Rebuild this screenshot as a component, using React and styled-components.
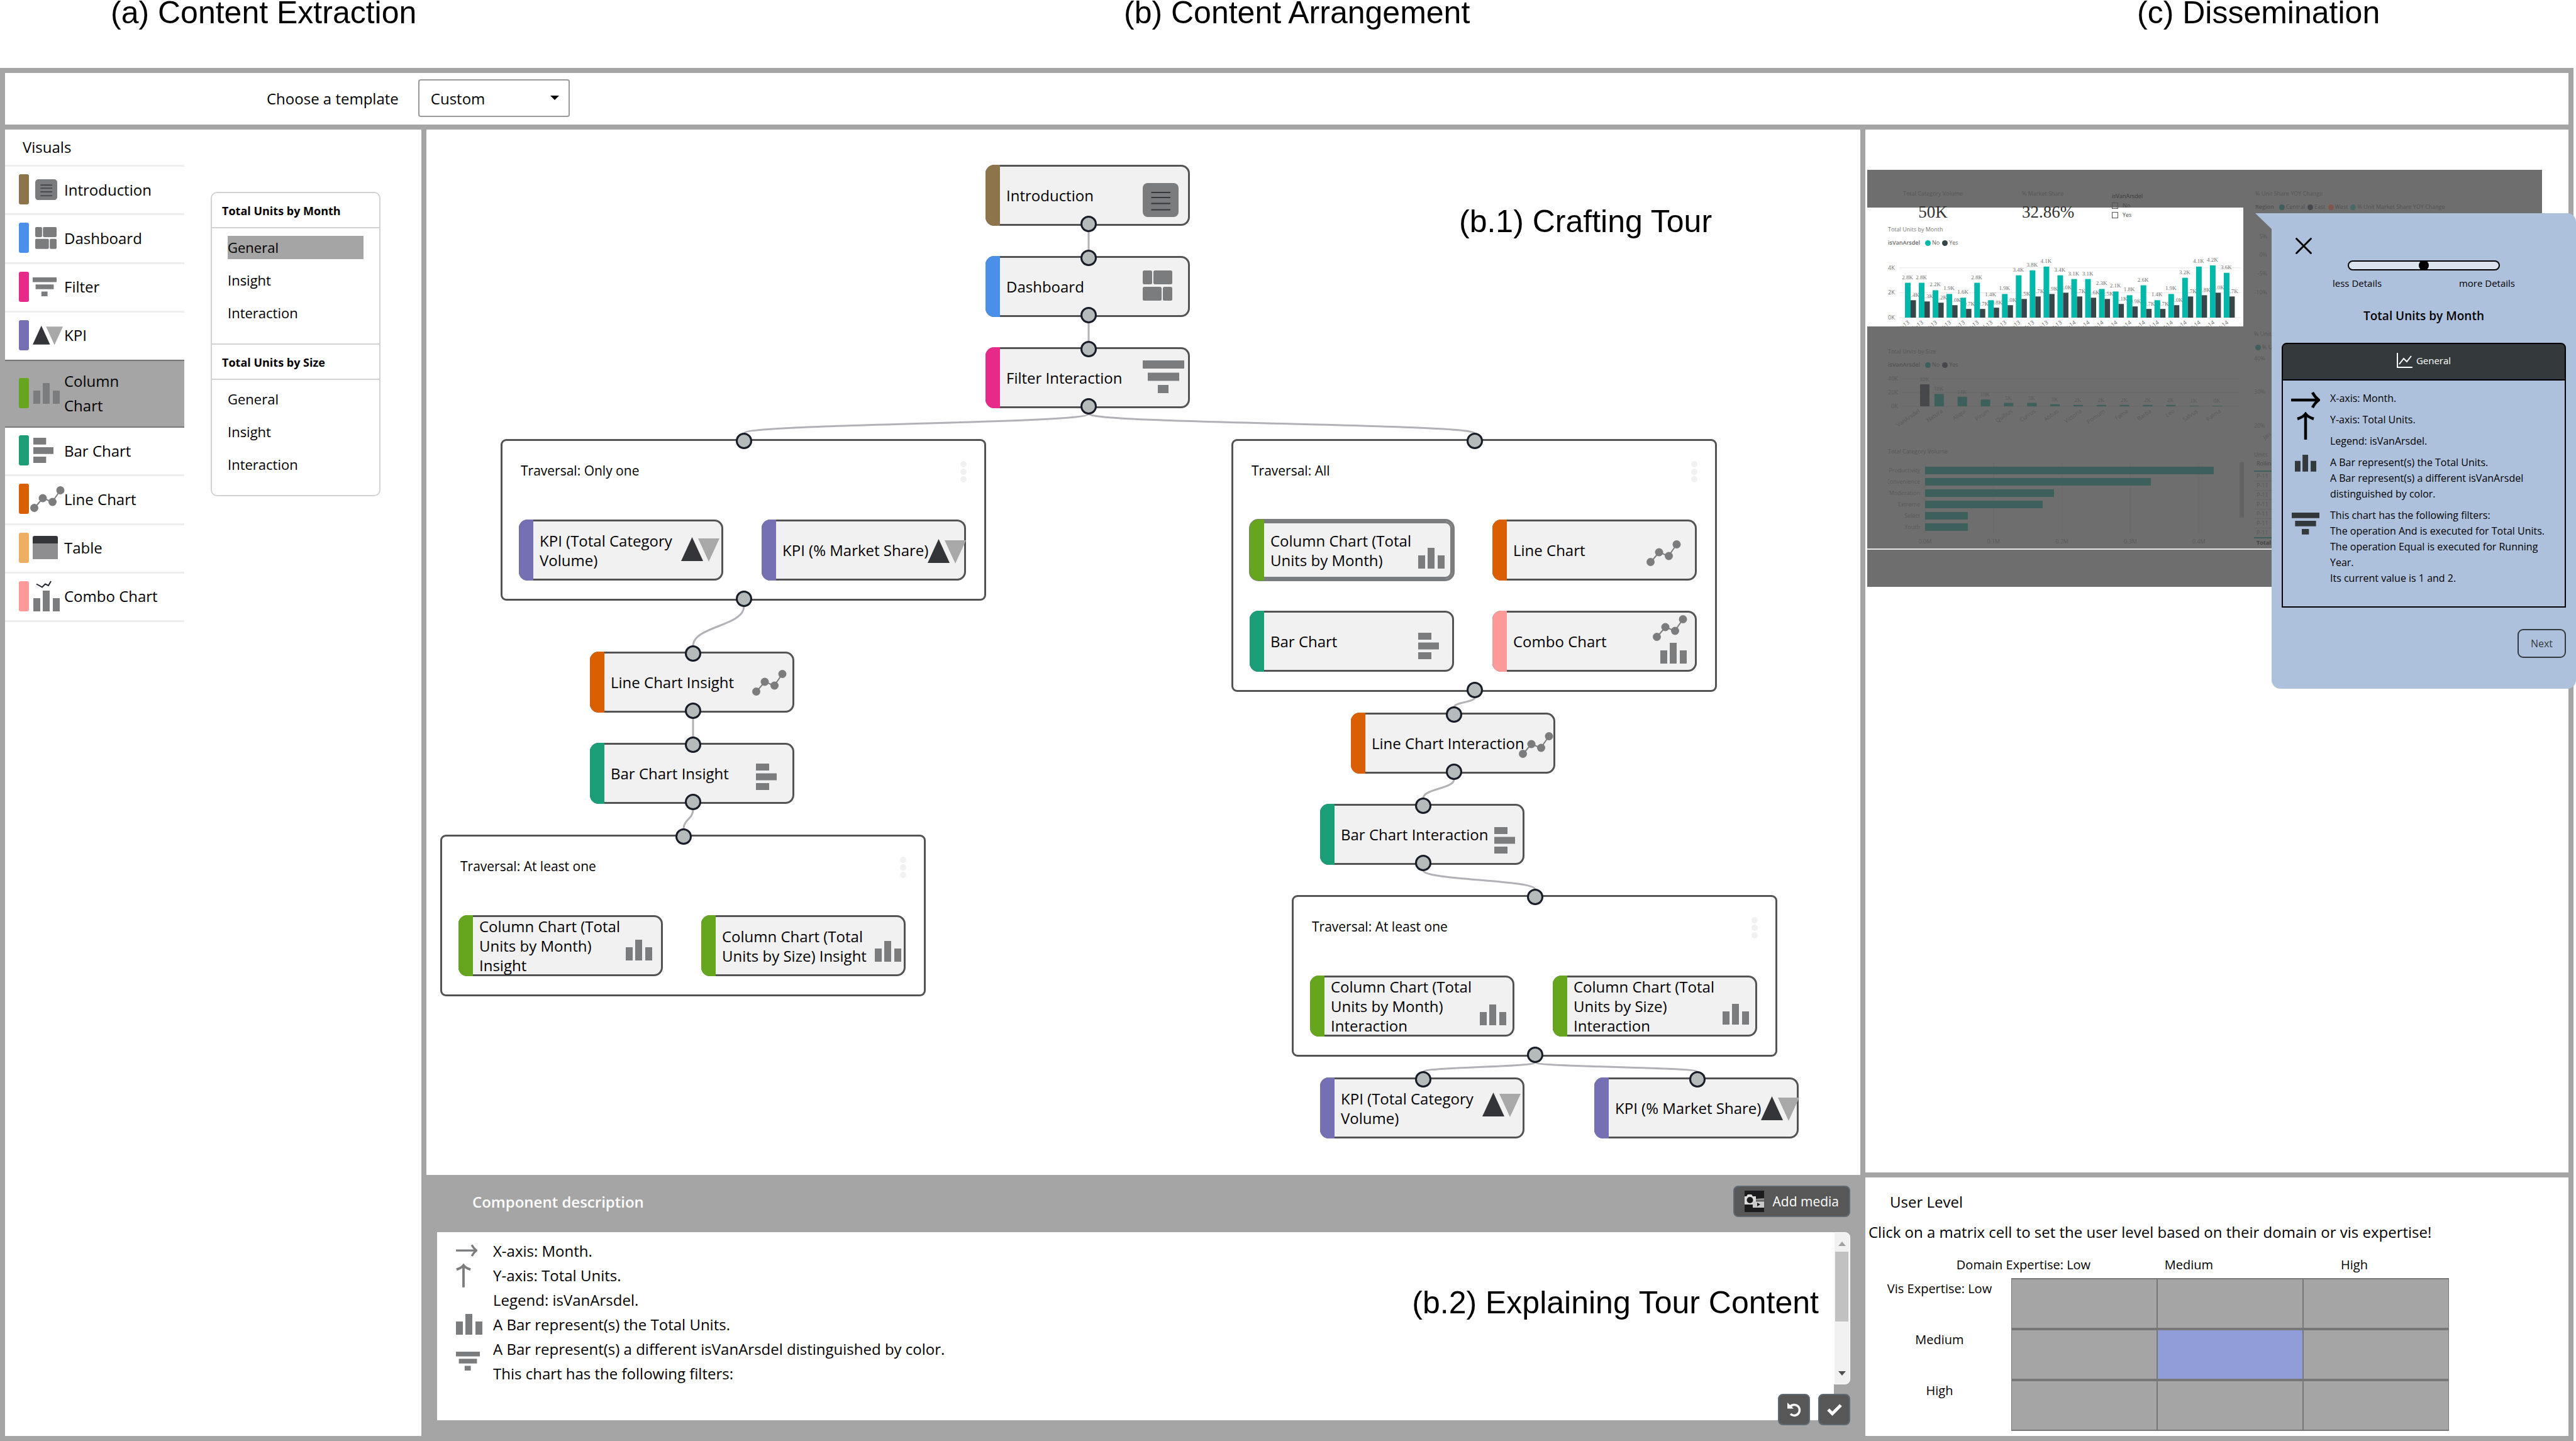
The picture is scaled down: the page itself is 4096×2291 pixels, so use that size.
import React, { useState } from "react";
import styled, { createGlobalStyle, css } from "styled-components";

const SANS = '"Open Sans", "Noto Sans", sans-serif';
const ARIAL = '"Liberation Sans", Arial, sans-serif';
const SERIF = '"Liberation Serif", "Times New Roman", serif';
const GREY = "#a5a5a5";
const ICON = "#7b7c7e";
const INK = "#343a3c";

const GlobalStyle = createGlobalStyle`
  *, *::before, *::after { box-sizing: border-box; }
  body { margin: 0; background: #fff; color: #000; font-family: ${SANS}; font-size: 24px; }
  button, select, input { font-family: inherit; color: inherit; margin: 0; }
  h1, h2, h3, p, ul { margin: 0; padding: 0; font-weight: 400; font-size: inherit; }
  ul { list-style: none; }
  svg { display: block; flex: none; }
`;

/* ---------- icons ---------- */

const LinePlot = () => (
  <>
    <path d="M6.500 35 20 19 35 25 48 6.500" fill="none" stroke={ICON} strokeWidth="2" />
    <circle cx="6.500" cy="34.500" r="6.500" />
    <circle cx="20" cy="19" r="6.500" />
    <circle cx="35.500" cy="25" r="6.500" />
    <circle cx="48" cy="6.500" r="6.500" />
  </>
);
const Columns = () => <path d="M0 12h11v21H0zM15 0h11v33H15zM31 12h11v21H31z" />;

const ICONS = {
  intro: [57, 54, <><rect width="57" height="54" rx="8" /><path d="M13.500 15h30.500M13.500 23h30.500M13.500 32.500h30.500M13.500 42.500h30.500" stroke="#35373a" strokeWidth="2.200" /></>],
  dashboard: [47, 48, <><rect width="15" height="22" rx="2.500" /><rect x="17" width="30" height="22" rx="2.500" /><rect y="26" width="30" height="22" rx="2.500" /><rect x="32" y="26" width="15" height="22" rx="2.500" /></>],
  filter: [66, 52, <path d="M0 0h66v13H0zM8 19.500h50v13H8zM24 39h17v13H24z" />],
  kpi: [61, 40, <><path d="M0 39h35L17.500 1z" fill="#333538" /><path d="M27 3h34L44 40z" fill="#a8a8a8" /></>],
  column: [42, 33, <Columns />],
  bar: [33, 42, <path d="M0 0h21v11H0zM0 15.500h33v11H0zM0 31h21v11H0z" />],
  line: [55, 41, <LinePlot />],
  table: [40, 37, <><path d="M0 12h40v25H0z" fill="#8e8e91" /><path d="M0 3q0-3 3-3h34q3 0 3 3v9H0z" fill="#333538" /></>],
  comboSmall: [42, 49, <><path d="M5 5.500l9 5 5-5 5 2.500 4-7" fill="none" stroke="#20242e" strokeWidth="2" /><g transform="translate(0 16)"><Columns /></g></>],
  combo: [55, 77, <><LinePlot /><g transform="translate(12 44)"><Columns /></g></>],
  arrowRight: [46, 30, <path d="M0 15h44M34 3c3 6 6 9 10 12-4 3-7 6-10 12" fill="none" stroke="currentColor" strokeWidth="4.500" />],
  arrowUp: [28, 44, <path d="M14 44V3M1 11c6-2 10-4 13-8 3 4 7 6 13 8" fill="none" stroke="currentColor" strokeWidth="4.500" />],
};

const Icon = ({ name, width, color = ICON }) => {
  const [w, h, art] = ICONS[name];
  const size = width || w;
  return (
    <svg width={size} height={(size * h) / w} viewBox={`0 0 ${w} ${h}`} fill={color} color={color} aria-hidden="true">
      {art}
    </svg>
  );
};

/* ---------- page shell ---------- */

const Page = styled.div`
  display: flex;
  flex-direction: column;
  min-height: 100vh;
  padding-right: 4px;
`;
const Columns3 = css`
  display: grid;
  grid-template-columns: 662px minmax(0, 1fr) 1118px;
  gap: 8px;
`;
const Titles = styled.header`
  ${Columns3}
  height: 108px;
  padding: 0 8px;
  font-family: ${ARIAL};
`;
const Title = styled.h1`
  font-size: 50px;
  line-height: 40px;
  white-space: nowrap;
  padding-left: ${(p) => p.$indent}px;
`;
const Frame = styled.main`
  flex: 1;
  display: flex;
  flex-direction: column;
  gap: 8px;
  padding: 8px;
  background: ${GREY};
`;
const Toolbar = styled.div`
  height: 82px;
  display: flex;
  align-items: center;
  gap: 31px;
  padding: 0 0 2px 416px;
  background: #fff;
`;
const SelectWrap = styled.div`
  position: relative;
  svg { position: absolute; right: 17px; top: 26px; pointer-events: none; }
`;
const Select = styled.select`
  appearance: none;
  width: 241px;
  height: 60px;
  padding: 0 18px;
  border: 2px solid #999;
  border-radius: 4px;
  background: #fff;
  font-size: 24px;
`;
const Body = styled.div`
  ${Columns3}
  flex: 1;
`;

/* ---------- left panel ---------- */

const LeftPanel = styled.section`
  background: #fff;
  display: flex;
  align-items: flex-start;
  gap: 42px;
`;
const Visuals = styled.nav`
  width: 285px;
  h2 { height: 56px; line-height: 56px; padding-left: 28px; }
`;
const VisualList = styled.ul`
  display: flex;
  flex-direction: column;
  height: 727px;
  border-top: 3px solid #eee;
`;
const VisualItem = styled.li`
  flex: ${(p) => (p.$on ? "0 0 106px" : "1")};
  border-bottom: ${(p) => (p.$on ? "2px solid #777" : "3px solid #eee")};
  background: ${(p) => (p.$on ? GREY : "#fff")};
  box-shadow: ${(p) => (p.$on ? "0 -2px #777" : "none")};
`;
const VisualButton = styled.button`
  width: 100%;
  height: 100%;
  display: flex;
  align-items: center;
  padding: 0 40px 2px 22px;
  border: 0;
  background: none;
  text-align: left;
  font-size: 24px;
  line-height: 39px;
`;
const Swatch = styled.span`
  flex: none;
  width: 16px;
  height: 48px;
  border-radius: 3px;
  background: ${(p) => p.$color};
`;
const IconCell = styled.span`
  flex: none;
  display: flex;
  width: 56px;
  padding-left: ${(p) => p.$inset}px;
`;
const Card = styled.div`
  width: 270px;
  margin-top: 99px;
  border: 2px solid #d2d2d2;
  border-radius: 10px;
`;
const CardSection = styled.section`
  & + & { border-top: 2px solid #d2d2d2; }
  h3 {
    height: 56px;
    line-height: 56px;
    padding-left: 16px;
    font-size: 18px;
    font-weight: 700;
    border-bottom: 2px solid #d2d2d2;
  }
  ul { display: grid; gap: 15px; padding: 12px 25px 30px; }
`;
const CardButton = styled.button`
  display: block;
  width: 100%;
  height: 37px;
  padding: 0;
  border: 0;
  text-align: left;
  font-size: 22px;
  line-height: 37px;
  background: ${(p) => (p.$on ? GREY : "none")};
`;

/* ---------- tour canvas ---------- */

const Middle = styled.section`
  display: flex;
  flex-direction: column;
`;
const Canvas = styled.div`
  position: relative;
  flex: 1;
  background: #fff;
`;
const Edges = styled.svg`
  position: absolute;
  inset: 0;
  width: 100%;
  height: 100%;
`;
const Annotation = styled.h2`
  position: absolute;
  font-family: ${ARIAL};
  font-size: 50px;
  line-height: 56px;
  white-space: nowrap;
`;
const CanvasNote = styled(Annotation)`
  left: 1642px;
  top: 118px;
`;
const ContentNote = styled(Annotation)`
  right: 50px;
  top: 84px;
`;
const Placed = styled.div`
  position: absolute;
  left: ${(p) => p.$x}px;
  top: ${(p) => p.$y}px;
`;
const NodeBox = styled.div`
  position: relative;
  width: 325px;
  height: 97px;
  display: flex;
  align-items: center;
  padding-left: 30px;
  border: 3px solid ${(p) => (p.$selected ? ICON : "#535353")};
  border-radius: 14px;
  background: #f1f1f1;
  box-shadow: ${(p) => (p.$selected ? `0 0 0 1px ${ICON}, inset 0 0 0 3px ${ICON}` : "none")};
  &::before {
    content: "";
    position: absolute;
    left: -3px;
    top: -3px;
    bottom: -3px;
    width: 23px;
    border-radius: 14px 0 0 14px;
    background: ${(p) => p.$color};
  }
`;
const NodeLabel = styled.span`
  font-size: 24px;
  line-height: 31px;
  white-space: pre;
`;
const NodeIcon = styled.span`
  position: absolute;
  left: ${(p) => p.$x}px;
  top: ${(p) => p.$y}px;
`;
const Handle = styled.i`
  position: absolute;
  left: 50%;
  ${(p) => (p.$side === "top" ? "top: -13px;" : "bottom: -13px;")}
  width: 26px;
  height: 26px;
  margin-left: -12px;
  border: 3px solid #171c28;
  border-radius: 50%;
  background: #b5babb;
`;
const GroupBox = styled.div`
  position: relative;
  width: 772px;
  padding: 0 26px 29px;
  border: 3px solid #535353;
  border-radius: 9px;
  background: #fff;
`;
const GroupHead = styled.div`
  height: 125px;
  display: flex;
  justify-content: space-between;
  padding: 32px 2px 0 3px;
  font-size: 21px;
  line-height: 30px;
`;
const MenuButton = styled.button`
  height: 34px;
  padding: 0;
  border: 0;
  background: none;
`;
const GroupGrid = styled.div`
  display: grid;
  grid-template-columns: 325px 325px;
  gap: 48px 61px;
`;

const COLORS = {
  intro: "#8e744b",
  dashboard: "#4a90e8",
  filter: "#e7298a",
  kpi: "#7570b3",
  column: "#66a61e",
  bar: "#1b9e77",
  line: "#d95f02",
  table: "#edb063",
  combo: "#fb9a99",
};

const TOUR = [
  { id: "intro", kind: "intro", text: "Introduction", x: 889, y: 56, ix: 247, iy: 26, ends: ["bottom"] },
  { id: "dash", kind: "dashboard", text: "Dashboard", x: 889, y: 201, ix: 247, iy: 20 },
  { id: "filter", kind: "filter", text: "Filter Interaction", x: 889, y: 346, ix: 247, iy: 18 },
  {
    id: "g1", title: "Traversal: Only one", x: 118, y: 492, h: 257,
    items: [
      { kind: "kpi", text: "KPI (Total Category\nVolume)", ix: 255, iy: 24 },
      { kind: "kpi", text: "KPI (% Market Share)", ix: 261, iy: 27 },
    ],
  },
  { id: "li", kind: "line", text: "Line Chart Insight", x: 260, y: 830, ix: 255, iy: 26 },
  { id: "bi", kind: "bar", text: "Bar Chart Insight", x: 260, y: 975, ix: 261, iy: 30 },
  {
    id: "g2", title: "Traversal: At least one", x: 22, y: 1121, h: 257, ends: ["top"],
    items: [
      { kind: "column", text: "Column Chart (Total\nUnits by Month)\nInsight", ix: 263, iy: 36 },
      { kind: "column", text: "Column Chart (Total\nUnits by Size) Insight", ix: 273, iy: 38 },
    ],
  },
  {
    id: "g3", title: "Traversal: All", x: 1280, y: 492, h: 402,
    items: [
      { kind: "column", text: "Column Chart (Total\nUnits by Month)", ix: 265, iy: 42, selected: true },
      { kind: "line", text: "Line Chart", ix: 242, iy: 30 },
      { kind: "bar", text: "Bar Chart", ix: 265, iy: 32 },
      { kind: "combo", text: "Combo Chart", ix: 252, iy: 4 },
    ],
  },
  { id: "lx", kind: "line", text: "Line Chart Interaction", x: 1470, y: 927, ix: 264, iy: 28 },
  { id: "bx", kind: "bar", text: "Bar Chart Interaction", x: 1421, y: 1072, ix: 274, iy: 34 },
  {
    id: "g4", title: "Traversal: At least one", x: 1376, y: 1217, h: 257,
    items: [
      { kind: "column", text: "Column Chart (Total\nUnits by Month)\nInteraction", ix: 267, iy: 43 },
      { kind: "column", text: "Column Chart (Total\nUnits by Size)\nInteraction", ix: 267, iy: 42 },
    ],
  },
  { id: "k3", kind: "kpi", text: "KPI (Total Category\nVolume)", x: 1421, y: 1507, ix: 255, iy: 20, ends: ["top"] },
  { id: "k4", kind: "kpi", text: "KPI (% Market Share)", x: 1857, y: 1507, ix: 262, iy: 26, ends: ["top"] },
];
const LINKS = [
  ["intro", "dash"], ["dash", "filter"], ["filter", "g1"], ["filter", "g3"], ["g1", "li"], ["li", "bi"],
  ["bi", "g2"], ["g3", "lx"], ["lx", "bx"], ["bx", "g4"], ["g4", "k3"], ["g4", "k4"],
];

const anchor = (id, side) => {
  const n = TOUR.find((t) => t.id === id);
  const h = n.h || 97;
  return [n.x + (n.items ? 387 : 164), side === "top" ? n.y - 9 : n.y + h + 9];
};
const edgePath = ([from, to]) => {
  const [x1, y1] = anchor(from, "bottom");
  const [x2, y2] = anchor(to, "top");
  const mid = (y1 + y2) / 2;
  return `M${x1} ${y1}C${x1} ${mid} ${x2} ${mid} ${x2} ${y2}`;
};

const Handles = ({ ends = ["top", "bottom"] }) => ends.map((e) => <Handle key={e} $side={e} />);

const TourNode = ({ node, children }) => (
  <NodeBox $color={COLORS[node.kind]} $selected={node.selected}>
    <NodeLabel>{node.text}</NodeLabel>
    <NodeIcon $x={node.ix} $y={node.iy}><Icon name={node.kind} /></NodeIcon>
    {children}
  </NodeBox>
);

const TourGroup = ({ node }) => (
  <GroupBox>
    <GroupHead>
      <h3>{node.title}</h3>
      <MenuButton type="button" aria-label={`${node.title} options`}>
        <svg width="10" height="34" viewBox="0 0 10 34" fill="#f1f1f1">
          <circle cx="5" cy="5" r="5" /><circle cx="5" cy="17" r="5" /><circle cx="5" cy="29" r="5" />
        </svg>
      </MenuButton>
    </GroupHead>
    <GroupGrid>
      {node.items.map((item) => <TourNode key={item.text} node={item} />)}
    </GroupGrid>
    <Handles ends={node.ends} />
  </GroupBox>
);

/* ---------- description panel ---------- */

const Description = styled.section`
  position: relative;
  height: 415px;
  padding-left: 17px;
  padding-right: 16px;
`;
const DescriptionHead = styled.div`
  height: 91px;
  display: flex;
  align-items: center;
  justify-content: space-between;
  padding: 0 0 8px 56px;
  h2 { color: #fff; font-weight: 600; font-size: 24px; padding-top: 1px; }
`;
const DarkButton = styled.button`
  display: flex;
  align-items: center;
  justify-content: center;
  gap: 14px;
  min-width: 51px;
  height: 50px;
  padding: 0 16px;
  border: 2px solid #5f6a74;
  border-radius: 8px;
  background: #575757;
  color: #fff;
  font-size: 21px;
`;
const SquareButton = styled(DarkButton)`
  width: 51px;
  padding: 0;
`;
const DescriptionBody = styled.div`
  position: relative;
  display: flex;
  align-items: flex-start;
`;
const Text = styled.div`
  flex: 1;
  height: 299px;
  display: grid;
  grid-template-columns: 59px 1fr;
  grid-auto-rows: 39px;
  align-items: center;
  padding: 10px 0 0 30px;
  background: #fff;
  line-height: 39px;
  p { grid-column: 2; }
`;
const Mark = styled.span`
  grid-column: 1;
  grid-row: ${(p) => p.$row};
  align-self: ${(p) => p.$align || "center"};
`;
const Scrollbar = styled.div`
  width: 26px;
  height: 242px;
  display: flex;
  flex-direction: column;
  align-items: center;
  justify-content: space-between;
  padding: 14px 0 13px;
  background: #f1f1f1;
  border: 1px solid #fff;
  border-radius: 0 8px 8px 0;
`;
const Thumb = styled.div`
  width: 21px;
  height: 111px;
  margin: 9px 2px auto 0;
  background: #c1c1c1;
`;
const Actions = styled.div`
  position: absolute;
  right: 16px;
  bottom: 17px;
  display: flex;
  gap: 13px;
`;

/* ---------- right column ---------- */

const Right = styled.section`
  display: flex;
  flex-direction: column;
  gap: 8px;
`;
const Preview = styled.div`
  position: relative;
  flex: 1;
  padding: 64px 0 0 3px;
  background: #fff;
`;
const Report = styled.div`
  position: relative;
  width: 1073px;
  height: 663px;
  overflow: hidden;
  background: #6e6e6e;
  color: #585858;
  font-size: 9px;
  line-height: 14px;
  white-space: nowrap;
`;
const Spotlight = styled.div`
  position: absolute;
  left: 0;
  top: 60px;
  width: 598px;
  height: 189px;
  background: #fff;
`;
const Rule = styled.div`
  position: absolute;
  left: 0;
  right: 0;
  top: ${(p) => p.$y}px;
  height: ${(p) => p.$h}px;
  background: ${(p) => p.$color};
`;
const Visual = styled.div`
  position: absolute;
  left: ${(p) => p.$x}px;
  top: ${(p) => p.$y}px;
`;
const VisualTitle = styled.h3`
  color: ${(p) => p.$color || "#575757"};
`;
const Figure = styled.p`
  margin-top: 8px;
  text-align: center;
  font-family: ${SERIF};
  font-size: 27px;
  line-height: 28px;
  color: #333;
`;
const Legend = styled.p`
  display: flex;
  align-items: center;
  gap: 2px;
  margin-top: 7px;
  color: ${(p) => p.$color || "#525252"};
  b { font-weight: 600; margin-right: 4px; }
`;
const Dot = styled.i`
  width: 9px;
  height: 9px;
  margin-left: 2px;
  border-radius: 50%;
  background: ${(p) => p.$color};
`;
const Tick = styled.label`
  display: flex;
  align-items: center;
  gap: 7px;
  height: 15px;
  color: #4a4a4a;
`;
const TickBox = styled.input`
  appearance: none;
  width: 10px;
  height: 10px;
  border: 1px solid #555;
`;
const MiniTable = styled.table`
  border-collapse: collapse;
  line-height: 13px;
  th, td { padding: 0 4px 1px; text-align: left; font-weight: 400; height: 14px; }
  thead th { padding-bottom: 5px; border-bottom: 2px solid #3d605d; color: #4c4c4c; }
  tbody td { border-bottom: 1px solid #666; }
  tfoot th { border-top: 2px solid #3d605d; font-weight: 700; color: #444; }
`;

const MONTHS = ["Jan", "Feb", "Mar", "Apr", "May", "Jun", "Jul", "Aug", "Sep", "Oct", "Nov", "Dec"];
const NO = [2.8, 2.8, 2.2, 1.9, 1.6, 2.8, 1.4, 1.9, 3.4, 3.8, 4.1, 3.4, 3.1, 3.1, 2.3, 2.1, 1.8, 2.6, 1.4, 1.9, 3.2, 4.1, 4.2, 3.6];
const YES = [1.4, 1.3, 1.2, 1.0, 0.7, 0.7, 0.8, 1.0, 1.5, 1.7, 1.9, 2.0, 1.7, 1.6, 1.5, 1.1, 0.9, 0.7, 0.7, 1.0, 1.7, 1.8, 2.0, 1.7];
const SIZES = [["VanArsdel", 32], ["Natura", 18], ["Aliqui", 14], ["Pirum", 10], ["Quibus", 5], ["Currus", 5], ["Abbas", 3], ["Victoria", 2], ["Pomum", 2], ["Fama", 2], ["Barba", 2], ["Leo", 2], ["Salvus", 1], ["Palma", 0]];
const VOLUMES = [["Productivity", 459], ["Convenience", 359], ["Moderation", 205], ["Extreme", 187], ["Select", 68], ["Youth", 68]];

const MonthChart = () => {
  const step = 22.04;
  const base = 109;
  const k = 19.8;
  return (
    <svg width="566" height="150" viewBox="0 0 566 150" fontFamily={SANS} fontSize="9" fill="#707070">
      {[4, 2, 0].map((v) => (
        <g key={v}>
          <path d={`M18 ${base - v * k}H561`} stroke="#e8e8e8" />
          <text x="0" y={base - v * k + 3}>{v}K</text>
        </g>
      ))}
      <g fontFamily={SERIF} textAnchor="middle">
        {YES.map((v, i) => <text key={i} x={41 + i * step} y={base - v * k - 5}>{v.toFixed(1)}K</text>)}
      </g>
      {NO.map((v, i) => (
        <g key={i}>
          <rect x={27 + i * step} y={base - v * k} width="9" height={v * k} fill="#01b8aa" />
          <rect x={36 + i * step} y={base - YES[i] * k} width="8.500" height={YES[i] * k} fill="#374649" />
        </g>
      ))}
      <g fontFamily={SERIF} textAnchor="middle">
        {NO.map((v, i) => <text key={i} x={31 + i * step} y={base - v * k - 6}>{v.toFixed(1)}K</text>)}
      </g>
      <g textAnchor="end">
        {NO.map((_, i) => (
          <text key={i} transform={`translate(${35 + i * step} 118) rotate(-35)`}>{`${MONTHS[i % 12]}-${i < 12 ? 13 : 14}`}</text>
        ))}
      </g>
    </svg>
  );
};

const SizeChart = () => (
  <svg width="566" height="96" viewBox="0 0 566 96" fontFamily={SANS} fontSize="9" fill="#5a5a5a">
    {[["40K", 12], ["20K", 34], ["0K", 56]].map(([t, y]) => (
      <g key={t}><text x={t === "0K" ? 5 : 0} y={y + 3}>{t}</text><path d={`M22 ${y}H560`} stroke="#696969" /></g>
    ))}
    {SIZES.map(([name, v], i) => {
      const x = i ? 37 + 36.85 * i : 51;
      const h = Math.max(1, v * 1.09);
      return (
        <g key={name}>
          <rect x={x} y={56 - h} width="15" height={h} fill={i ? "#3d605d" : "#47484b"} />
          <text x={x + 7} y={56 - h - 5} textAnchor="middle" fontFamily={SERIF}>{v}K</text>
          <text textAnchor="end" transform={`translate(${51 + 36.85 * i} 65) rotate(-35)`}>{name}</text>
        </g>
      );
    })}
  </svg>
);

const VolumeChart = () => (
  <svg width="570" height="140" viewBox="0 0 570 140" fontFamily={SANS} fontSize="9" fill="#5a5a5a">
    {[0, 1, 2, 3, 4].map((v) => (
      <g key={v}>
        <path d={`M${59 + v * 108.800} 6V118`} stroke="#696969" />
        <text x={59 + v * 108.800} y="134" textAnchor="middle">{`0.${v}M`}</text>
      </g>
    ))}
    {VOLUMES.map(([name, w], i) => (
      <g key={name}>
        <text x="51" y={21 + i * 18} textAnchor="end">{name}</text>
        <rect x="59" y={12 + i * 18} width={w} height="12" fill="#3d605d" />
      </g>
    ))}
    <rect x="559" y="5" width="7" height="88" fill="#626262" />
  </svg>
);

const TrendScale = () => (
  <svg width="34" height="146" viewBox="0 0 34 146" fontFamily={SANS} fontSize="9" fill="#5a5a5a">
    <text x="0" y="13">40%</text><text x="0" y="66">30%</text><text x="0" y="120">20%</text>
    <text transform="translate(17 139) rotate(-35)">Jan</text>
  </svg>
);

const ChangeScale = () => (
  <svg width="28" height="104" viewBox="0 0 28 104" fontFamily={SANS} fontSize="9" fill="#5a5a5a" textAnchor="end">
    <text x="26" y="11">5%</text><text x="26" y="40">0%</text><text x="26" y="70">-5%</text><text x="26" y="100">-10%</text>
  </svg>
);

const SizeLegend = ({ colors, tone }) => (
  <Legend $color={tone}><b>isVanArsdel</b><Dot $color={colors[0]} />No<Dot $color={colors[1]} />Yes</Legend>
);

const ReportPreview = () => (
  <Report>
    <Spotlight />
    <Rule $y={602} $h={2} $color="#e6e6e6" />
    <Visual $x={57} $y={31}><VisualTitle>Total Category Volume</VisualTitle><Figure>50K</Figure></Visual>
    <Visual $x={246} $y={31}><VisualTitle>% Market Share</VisualTitle><Figure>32.86%</Figure></Visual>
    <Visual $x={389} $y={35}>
      <VisualTitle $color="#3a3a3a">isVanArsdel</VisualTitle>
      <Tick><TickBox type="checkbox" />No</Tick>
      <Tick><TickBox type="checkbox" />Yes</Tick>
    </Visual>
    <Visual $x={33} $y={88}><VisualTitle $color="#777">Total Units by Month</VisualTitle><SizeLegend colors={["#01b8aa", "#374649"]} tone="#666" /></Visual>
    <Visual $x={33} $y={126}><MonthChart /></Visual>
    <Visual $x={33} $y={282}><VisualTitle>Total Units by Size</VisualTitle><SizeLegend colors={["#3d605d", "#47484b"]} /></Visual>
    <Visual $x={33} $y={320}><SizeChart /></Visual>
    <Visual $x={33} $y={441}><VisualTitle>Total Category Volume</VisualTitle></Visual>
    <Visual $x={33} $y={460}><VolumeChart /></Visual>
    <Visual $x={617} $y={31}>
      <VisualTitle>% Unit Share YOY Change</VisualTitle>
      <Legend>
        <b>Region</b><Dot $color="#3d605d" />Central<Dot $color="#47484b" />East<Dot $color="#80564c" />West
        <Dot $color="#466a68" />% Unit Market Share YOY Change
      </Legend>
    </Visual>
    <Visual $x={610} $y={98}><ChangeScale /></Visual>
    <Visual $x={615} $y={254}><VisualTitle>% Unit</VisualTitle><Legend><Dot $color="#3d605d" />% U</Legend></Visual>
    <Visual $x={615} $y={290}><TrendScale /></Visual>
    <Visual $x={615} $y={446}>
      <VisualTitle>Units</VisualTitle>
      <MiniTable>
        <thead><tr><th>Rollin</th></tr></thead>
        <tbody>{[0, 1, 2, 3, 4, 5, 6].map((r) => <tr key={r}><td>P-11</td></tr>)}</tbody>
        <tfoot><tr><th>Total</th></tr></tfoot>
      </MiniTable>
    </Visual>
  </Report>
);

const Popup = styled.aside`
  position: absolute;
  z-index: 2;
  left: 646px;
  top: 133px;
  width: 484px;
  height: 756px;
  display: flex;
  flex-direction: column;
  padding: 39px 16px 0;
  border-radius: 0 14px 14px 14px;
  background: #aec1dc;
  &::before {
    content: "";
    position: absolute;
    left: -26px;
    top: 0;
    border-style: solid;
    border-width: 0 27px 26px 0;
    border-color: transparent #aec1dc transparent transparent;
  }
`;
const CloseButton = styled.button`
  width: 26px;
  height: 26px;
  margin-left: 22px;
  padding: 0;
  border: 0;
  background: none;
`;
const Slider = styled.input`
  appearance: none;
  align-self: center;
  width: 242px;
  height: 16px;
  margin-top: 10px;
  border: 2px solid #000;
  border-radius: 8px;
  background: #dbe4ee;
  &::-webkit-slider-thumb {
    appearance: none;
    width: 16px;
    height: 16px;
    border-radius: 50%;
    background: #000;
  }
`;
const SliderEnds = styled.div`
  align-self: center;
  width: 290px;
  display: flex;
  justify-content: space-between;
  margin-top: 9px;
  font-size: 15px;
  line-height: 22px;
`;
const PopupTitle = styled.h2`
  margin: 28px 0 30px;
  text-align: center;
  font-size: 19px;
  font-weight: 600;
  line-height: 26px;
`;
const Tab = styled.h3`
  height: 60px;
  display: flex;
  align-items: center;
  justify-content: center;
  gap: 6px;
  padding-bottom: 4px;
  border: 2px solid #000;
  border-radius: 8px 8px 0 0;
  background: ${INK};
  color: #fff;
  font-size: 15px;
`;
const Facts = styled.ul`
  display: grid;
  gap: 9px;
  height: 361px;
  align-content: start;
  padding: 16px 0;
  border: 2px solid #000;
  border-top: 0;
  font-size: 16px;
  line-height: 25px;
`;
const Fact = styled.li`
  display: grid;
  grid-template-columns: 75px 1fr;
`;
const FactIcon = styled.span`
  height: 25px;
  display: flex;
  align-items: flex-start;
  justify-content: center;
  padding: ${(p) => p.$drop || 0}px 4px 0 0;
`;
const NextButton = styled.button`
  align-self: flex-end;
  width: 77px;
  height: 46px;
  margin-top: 34px;
  border: 2px solid ${INK};
  border-radius: 9px;
  background: none;
  color: ${INK};
  font-size: 16px;
`;

const UserLevel = styled.section`
  height: 411px;
  background: #fff;
  h2 { padding: 19px 0 0 39px; line-height: 40px; }
  p { padding: 9px 0 0 5px; line-height: 38px; white-space: nowrap; }
`;
const ColumnLabels = styled.div`
  display: grid;
  grid-template-columns: repeat(3, 263px);
  margin-left: 120px;
  padding-top: 16px;
  text-align: center;
  font-size: 20px;
  line-height: 34px;
`;
const MatrixRow = styled.div`
  display: grid;
  grid-template-columns: 228px repeat(3, 232px);
  padding-left: 4px;
  text-align: center;
  font-size: 20px;
  line-height: 34px;
`;
const Cell = styled.button`
  height: 81px;
  border: solid #777;
  border-width: 2px 1px;
  background: ${(p) => (p.$on ? "#919dd9" : GREY)};
`;
const Matrix = styled.div`
  margin-top: 4px;
`;

/* ---------- app ---------- */

const VISUALS = [
  ["Introduction", "intro", "intro", 35, 10],
  ["Dashboard", "dashboard", "dashboard", 34, 10],
  ["Filter", "filter", "filter", 38, 6],
  ["KPI", "kpi", "kpi", 48, 6],
  ["Column Chart", "column", "column", 42, 7],
  ["Bar Chart", "bar", "bar", 32, 7],
  ["Line Chart", "line", "line", 55, 2],
  ["Table", "table", "table", 40, 6],
  ["Combo Chart", "combo", "comboSmall", 42, 7],
];
const LEVELS = ["Low", "Medium", "High"];

export default function App() {
  const [visual, setVisual] = useState("Column Chart");
  const [part, setPart] = useState("Total Units by Month/General");
  const [level, setLevel] = useState("Medium/Medium");

  return (
    <>
      <GlobalStyle />
      <Page>
        <Titles>
          <Title $indent={168}>(a) Content Extraction</Title>
          <Title $indent={1109}>(b) Content Arrangement</Title>
          <Title $indent={432}>(c) Dissemination</Title>
        </Titles>
        <Frame>
          <Toolbar>
            <label htmlFor="template">Choose a template</label>
            <SelectWrap>
              <Select id="template" defaultValue="Custom"><option>Custom</option></Select>
              <svg width="14" height="7" viewBox="0 0 14 7"><path d="M0 0h14L7 7z" /></svg>
            </SelectWrap>
          </Toolbar>
          <Body>
            <LeftPanel>
              <Visuals>
                <h2>Visuals</h2>
                <VisualList>
                  {VISUALS.map(([name, color, icon, size, inset]) => (
                    <VisualItem key={name} $on={name === visual}>
                      <VisualButton type="button" onClick={() => setVisual(name)}>
                        <Swatch $color={COLORS[color]} />
                        <IconCell $inset={inset}><Icon name={icon} width={size} /></IconCell>
                        {name}
                      </VisualButton>
                    </VisualItem>
                  ))}
                </VisualList>
              </Visuals>
              <Card>
                {["Total Units by Month", "Total Units by Size"].map((title) => (
                  <CardSection key={title}>
                    <h3>{title}</h3>
                    <ul>
                      {["General", "Insight", "Interaction"].map((name) => (
                        <li key={name}>
                          <CardButton type="button" $on={part === `${title}/${name}`} onClick={() => setPart(`${title}/${name}`)}>{name}</CardButton>
                        </li>
                      ))}
                    </ul>
                  </CardSection>
                ))}
              </Card>
            </LeftPanel>

            <Middle>
              <Canvas>
                <Edges fill="none" stroke="#b1b1b7" strokeWidth="3">
                  {LINKS.map((link) => <path key={link.join()} d={edgePath(link)} />)}
                </Edges>
                <CanvasNote>(b.1) Crafting Tour</CanvasNote>
                {TOUR.map((n) => (
                  <Placed key={n.id} $x={n.x} $y={n.y}>
                    {n.items ? <TourGroup node={n} /> : <TourNode node={n}><Handles ends={n.ends} /></TourNode>}
                  </Placed>
                ))}
              </Canvas>
              <Description>
                <DescriptionHead>
                  <h2>Component description</h2>
                  <DarkButton type="button">
                    <svg width="31" height="34" viewBox="0 0 31 34">
                      <rect width="31" height="34" fill="#1c1c1e" />
                      <path d="M0 9h3l2-3h6l2 3h5v13H0z" fill="#dcdcdc" />
                      <circle cx="8.500" cy="15" r="5" fill="#1c1c1e" />
                      <path d="M13 17h18v10H13z" fill="#c9c9c9" />
                      <path d="M18 13l13-1v4H18z" fill="#8a8a8a" />
                      <path d="M20 19v6l5-3z" fill="#1c1c1e" />
                    </svg>
                    Add media
                  </DarkButton>
                </DescriptionHead>
                <DescriptionBody>
                  <Text>
                    <Mark $row="1"><Icon name="arrowRight" width={34} /></Mark>
                    <Mark $row="2" $align="end"><Icon name="arrowUp" width={24} /></Mark>
                    <Mark $row="4"><Icon name="column" /></Mark>
                    <Mark $row="5 / span 2"><Icon name="filter" width={38} /></Mark>
                    <p>X-axis: Month.</p>
                    <p>Y-axis: Total Units.</p>
                    <p>Legend: isVanArsdel.</p>
                    <p>A Bar represent(s) the Total Units.</p>
                    <p>A Bar represent(s) a different isVanArsdel distinguished by color.</p>
                    <p>This chart has the following filters:</p>
                  </Text>
                  <Scrollbar>
                    <svg width="12" height="7" viewBox="0 0 12 7" fill="#a0a0a0"><path d="M0 7h12L6 0z" /></svg>
                    <Thumb />
                    <svg width="12" height="7" viewBox="0 0 12 7" fill="#505050"><path d="M0 0h12L6 7z" /></svg>
                  </Scrollbar>
                  <ContentNote>(b.2) Explaining Tour Content</ContentNote>
                </DescriptionBody>
                <Actions>
                  <SquareButton type="button" aria-label="Reset">
                    <svg width="26" height="26" viewBox="0 0 26 26" fill="none" stroke="#fff" strokeWidth="3.500">
                      <path d="M6 9a8.500 8.500 0 1 1 1 11" />
                      <path d="M2 2v9.500h10z" fill="#fff" stroke="none" />
                    </svg>
                  </SquareButton>
                  <SquareButton type="button" aria-label="Save">
                    <svg width="26" height="22" viewBox="0 0 26 22" fill="none" stroke="#fff" strokeWidth="5"><path d="M3 11l6.500 6.500L23 4" /></svg>
                  </SquareButton>
                </Actions>
              </Description>
            </Middle>

            <Right>
              <Preview>
                <ReportPreview />
                <Popup>
                  <CloseButton type="button" aria-label="Close">
                    <svg width="26" height="26" viewBox="0 0 26 26" stroke="#000" strokeWidth="3" strokeLinecap="round"><path d="M1.500 1.500l23 23M24.500 1.500l-23 23" /></svg>
                  </CloseButton>
                  <Slider type="range" min="0" max="2" defaultValue="1" aria-label="Level of detail" />
                  <SliderEnds><span>less Details</span><span>more Details</span></SliderEnds>
                  <PopupTitle>Total Units by Month</PopupTitle>
                  <Tab>
                    <svg width="25" height="24" viewBox="0 0 25 24" fill="none" stroke="#fff" strokeWidth="2">
                      <path d="M1 0v23h24" /><path d="M4 18l7-9 5 5 7-9" />
                    </svg>
                    General
                  </Tab>
                  <Facts>
                    <Fact><FactIcon><Icon name="arrowRight" color="#000" width={46} /></FactIcon>X-axis: Month.</Fact>
                    <Fact><FactIcon><Icon name="arrowUp" color="#000" width={28} /></FactIcon>Y-axis: Total Units.</Fact>
                    <Fact><FactIcon />Legend: isVanArsdel.</Fact>
                    <Fact>
                      <FactIcon><Icon name="column" color={INK} width={34} /></FactIcon>
                      <span>A Bar represent(s) the Total Units.<br />A Bar represent(s) a different isVanArsdel<br />distinguished by color.</span>
                    </Fact>
                    <Fact>
                      <FactIcon $drop={8}><Icon name="filter" color={INK} width={44} /></FactIcon>
                      <span>This chart has the following filters:<br />The operation And is executed for Total Units.<br />The operation Equal is executed for Running<br />Year.<br />Its current value is 1 and 2.</span>
                    </Fact>
                  </Facts>
                  <NextButton type="button">Next</NextButton>
                </Popup>
              </Preview>
              <UserLevel>
                <h2>User Level</h2>
                <p>Click on a matrix cell to set the user level based on their domain or vis expertise!</p>
                <ColumnLabels><span>Domain Expertise: Low</span><span>Medium</span><span>High</span></ColumnLabels>
                <Matrix>
                  {LEVELS.map((vis, i) => (
                    <MatrixRow key={vis}>
                      <span>{i ? vis : `Vis Expertise: ${vis}`}</span>
                      {LEVELS.map((domain) => (
                        <Cell
                          key={domain}
                          type="button"
                          aria-label={`Vis expertise ${vis}, domain expertise ${domain}`}
                          $on={level === `${vis}/${domain}`}
                          onClick={() => setLevel(`${vis}/${domain}`)}
                        />
                      ))}
                    </MatrixRow>
                  ))}
                </Matrix>
              </UserLevel>
            </Right>
          </Body>
        </Frame>
      </Page>
    </>
  );
}
